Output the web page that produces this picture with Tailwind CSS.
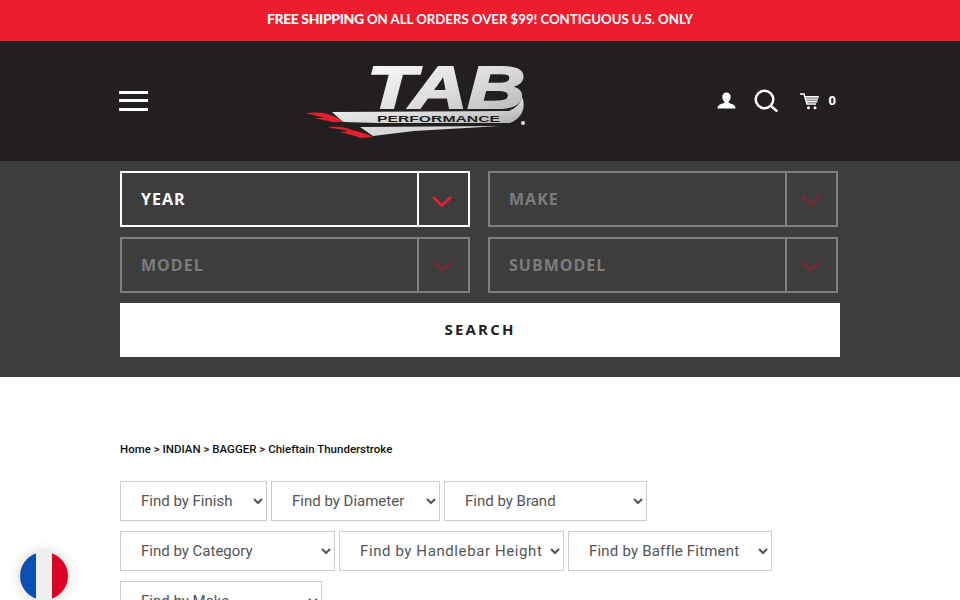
<!DOCTYPE html>
<html lang="en">
<head>
<meta charset="utf-8">
<title>TAB Performance</title>
<script src="https://cdn.jsdelivr.net/npm/@tailwindcss/browser@4"></script>
</head>
<body class="h-[600px] overflow-hidden bg-white font-['Roboto',sans-serif]">
<div class="flex h-[41px] items-center justify-center bg-[#ed1c2e] pb-[3px] font-['Lato',sans-serif] text-[13.200px] font-bold text-white">
  <span><span class="text-[14px] font-black tracking-[-0.4px]">FREE SHIPPING</span> ON ALL ORDERS OVER $99! CONTIGUOUS U.S. ONLY</span>
</div>
<header class="flex h-[120px] bg-[#231f20]">
  <div class="mx-auto flex w-[720px] items-center">
    <div class="-ml-px mb-px flex w-[29px] flex-col gap-[5.500px]">
      <span class="h-[3px] bg-white"></span><span class="h-[3px] bg-white"></span><span class="h-[3px] bg-white"></span>
    </div>
    <div class="mb-[10px] ml-[156px] h-[100px] w-[226px]">
      <svg viewBox="0 -10 226 100" width="226" height="100" aria-label="TAB Performance logo">
        <defs>
          <linearGradient id="g" x1="0" y1="0" x2="1" y2="1"><stop offset="0" stop-color="#ffffff"/><stop offset="0.55" stop-color="#dcdcdc"/><stop offset="1" stop-color="#b0b0b0"/></linearGradient>
        </defs>
        <text x="63" y="52" font-family="Liberation Sans" font-weight="700" font-style="italic" font-size="60" textLength="158" lengthAdjust="spacingAndGlyphs" fill="url(#g)" stroke="url(#g)" stroke-width="2">TAB</text>
        <path d="M28 56 L205 55 C212 52 217 47 218 41 C222 50 219 62 206 67 L73 67 L39 66 Z" fill="url(#g)"/>
        <path d="M56 71 L196 70 L110 75 L69 80 Z" fill="#d8d8d8"/>
        <text x="73" y="66" font-family="Liberation Sans" font-weight="700" font-size="8.500" textLength="123" lengthAdjust="spacingAndGlyphs" fill="#231f20">PERFORMANCE</text>
        <circle cx="219" cy="67" r="2" fill="#ddd"/>
        <path d="M1 57 C10 56 20 56 26 59 C32 61 36 63 39 66 L27 66 C23 64 16 64 11 62 L20 62 C14 60 8 59 1 57 Z" fill="#e3202f"/>
        <path d="M24 71 C34 70 42 71 48 74 C56 76 64 78 69 81 L56 82 C50 79 42 78 36 76 L44 75 C38 73 30 73 24 71 Z" fill="#e3202f"/>
      </svg>
    </div>
    <div class="ml-auto mr-[4px] flex items-center">
      <svg width="19" height="18" viewBox="0 0 20 18" fill="#fff"><path d="M10 0c3 0 4.600 2.200 4.400 5-.1 2-1 3.600-2 4.500-.4.500-.2 1.200.5 1.500l4 1.700c1.700.7 2.600 2.200 2.600 4.300H.5c0-2.100.9-3.600 2.600-4.300l4-1.700c.7-.3.9-1 .5-1.500-1-.9-1.900-2.500-2-4.500C5.400 2.200 7 0 10 0z"/></svg>
      <svg class="ml-[18px]" width="24" height="24" viewBox="0 0 24 24" fill="none" stroke="#fff"><circle cx="10.500" cy="10.500" r="8.800" stroke-width="2.500"/><path d="M17 17l5.500 4.800" stroke-width="2.500" stroke-linecap="round"/></svg>
      <svg class="ml-[21px]" width="22" height="17" viewBox="0 0 20 17" fill="none" stroke="#fff"><path d="M0 1h4l3 10h9" stroke-width="1.500"/><path d="M5 3h14l-2 6.500H7z" fill="#fff" stroke="none"/><path d="M6 5h12M6.500 7.200h11" stroke="#231f20" stroke-width=".7"/><circle cx="8.500" cy="14.800" r="1.500" fill="#fff" stroke="none"/><circle cx="15" cy="14.800" r="1.500" fill="#fff" stroke="none"/></svg>
      <span class="ml-[8px] font-['Open_Sans',sans-serif] text-[13px] font-bold text-white">0</span>
    </div>
  </div>
</header>
<section class="h-[216px] bg-[#3d3d3d] pt-[10px]">
  <div class="mx-auto w-[720px] font-['Open_Sans',sans-serif]">
    <div class="grid grid-cols-[350px_350px] gap-x-[18px] gap-y-[10px]">
      <div class="flex h-[56px] border-2 border-white text-white">
        <div class="flex flex-1 items-center pb-px pl-[19px] text-[16px] font-bold tracking-[1px]">YEAR</div>
        <div class="flex w-[51px] items-center justify-center border-l-2 border-white pr-[3px] pt-[6px]">
          <svg width="20" height="12" viewBox="0 0 20 12" fill="none" stroke="#ed1c2e" stroke-width="2.500"><path d="M1 1l9 8.500L19 1"/></svg>
        </div>
      </div>
      <div class="flex h-[56px] border-2 border-[#808080] text-[#7c7c7c]">
        <div class="flex flex-1 items-center pb-px pl-[19px] text-[16px] font-bold tracking-[1px]">MAKE</div>
        <div class="flex w-[51px] items-center justify-center border-l-2 border-[#808080] pr-[2px] pt-[4px]">
          <svg width="20" height="12" viewBox="0 0 20 12" fill="none" stroke="#7a2a35" stroke-width="2.500"><path d="M1 1l9 8.500L19 1"/></svg>
        </div>
      </div>
      <div class="flex h-[56px] border-2 border-[#808080] text-[#7c7c7c]">
        <div class="flex flex-1 items-center pb-px pl-[19px] text-[16px] font-bold tracking-[1px]">MODEL</div>
        <div class="flex w-[51px] items-center justify-center border-l-2 border-[#808080] pr-[2px] pt-[4px]">
          <svg width="20" height="12" viewBox="0 0 20 12" fill="none" stroke="#7a2a35" stroke-width="2.500"><path d="M1 1l9 8.500L19 1"/></svg>
        </div>
      </div>
      <div class="flex h-[56px] border-2 border-[#808080] text-[#7c7c7c]">
        <div class="flex flex-1 items-center pb-px pl-[19px] text-[16px] font-bold tracking-[1px]">SUBMODEL</div>
        <div class="flex w-[51px] items-center justify-center border-l-2 border-[#808080] pr-[2px] pt-[4px]">
          <svg width="20" height="12" viewBox="0 0 20 12" fill="none" stroke="#7a2a35" stroke-width="2.500"><path d="M1 1l9 8.500L19 1"/></svg>
        </div>
      </div>
    </div>
    <button class="mt-[10px] block h-[54px] w-[720px] bg-white pb-[2px] text-[15px] font-bold tracking-[2.200px] text-[#231f20]">SEARCH</button>
  </div>
</section>
<main class="mx-auto w-[720px] pt-[63px]">
  <nav class="text-[11.500px] font-medium leading-[18px] text-[#111]">Home &gt; INDIAN &gt; BAGGER &gt; Chieftain Thunderstroke</nav>
  <div class="mt-[23px] flex flex-col gap-[10px] text-[15px] text-[#555]">
    <div class="flex gap-[4px]">
      <select class="h-[40px] w-[147px] border border-[#ccc] bg-white pb-px pl-[16px]"><option>Find by Finish</option></select>
      <select class="h-[40px] w-[169px] border border-[#ccc] bg-white pb-px pl-[16px]"><option>Find by Diameter</option></select>
      <select class="h-[40px] w-[203px] border border-[#ccc] bg-white pb-px pl-[16px]"><option>Find by Brand</option></select>
    </div>
    <div class="flex gap-[4px]">
      <select class="h-[40px] w-[215px] border border-[#ccc] bg-white pb-px pl-[16px]"><option>Find by Category</option></select>
      <select class="h-[40px] w-[225px] border border-[#ccc] bg-white pb-px pl-[16px] tracking-[0.6px]"><option>Find by Handlebar Height</option></select>
      <select class="h-[40px] w-[204px] border border-[#ccc] bg-white pb-px pl-[16px] tracking-[0.2px]"><option>Find by Baffle Fitment</option></select>
    </div>
    <div class="flex gap-[4px]">
      <select class="h-[40px] w-[202px] border border-[#ccc] bg-white pb-px pl-[16px]"><option>Find by Make</option></select>
    </div>
  </div>
</main>
<div class="fixed left-[20px] top-[552px] flex h-[48px] w-[48px] overflow-hidden rounded-full shadow-[0_0_14px_rgba(0,0,0,0.18)]">
  <span class="w-[16px] bg-[#0a50b4]"></span><span class="w-[16px] bg-[#f0f0f0]"></span><span class="w-[16px] bg-[#dc0028]"></span>
</div>
</body>
</html>
